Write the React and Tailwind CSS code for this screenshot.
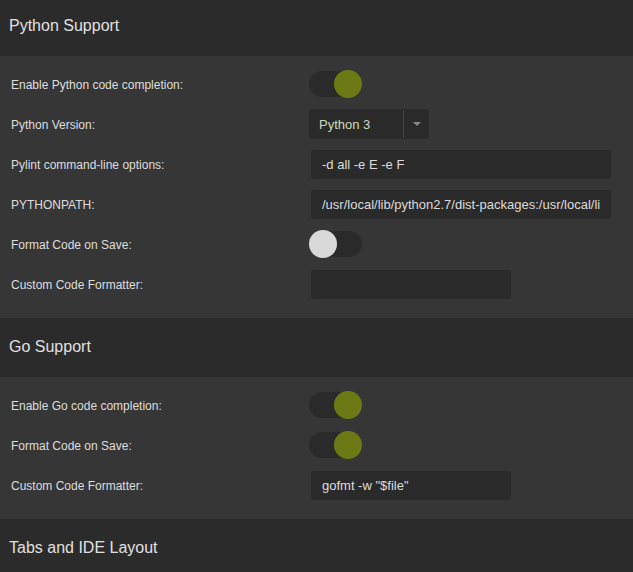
import React from 'react';

const font = { fontFamily: '"Liberation Sans", Arial, sans-serif' };

function Toggle({ on }) {
  return (
    <div className="relative w-[53px] h-[26px] rounded-full bg-[#2a2a2a]">
      <div
        className={
          on
            ? 'absolute right-0 top-[-1px] w-[28px] h-[28px] rounded-full bg-[#6b7a14]'
            : 'absolute left-0 top-[-1px] w-[28px] h-[28px] rounded-full bg-[#d9d9d9]'
        }
      />
    </div>
  );
}

function TextBox({ value, wide }) {
  return (
    <input
      readOnly
      value={value}
      className={`ml-[2px] h-[29px] rounded-[3px] bg-[#2a2a2a] px-[11px] pt-[1px] text-[13px] text-[#dcdcdc] outline-none ${
        wide ? 'w-[300px]' : 'w-[200px]'
      }`}
      style={font}
    />
  );
}

function Select() {
  return (
    <div className="w-[120px] h-[30px] rounded-[3px] bg-[#2a2a2a] flex items-center">
      <span className="flex-1 pl-[10px] pt-[1px] text-[13px] text-[#c9dcb9]">Python 3</span>
      <div className="w-[1px] h-[28px] bg-[#444]" />
      <div className="w-[25px] flex justify-center">
        <div className="w-0 h-0 border-l-[4px] border-r-[4px] border-t-[4px] border-l-transparent border-r-transparent border-t-[#888]" />
      </div>
    </div>
  );
}

function Row({ label, children }) {
  return (
    <div className="h-[40px] flex items-center">
      <div className="w-[309px] pl-[11px] pt-[2px] text-[12px] text-[#dedede]">{label}</div>
      {children}
    </div>
  );
}

function Header({ title, cut }) {
  return (
    <div
      className={`bg-[#2b2b2b] flex items-center pl-[9px] text-[16px] text-[#e0e0e0] ${
        cut ? 'h-[56px]' : 'h-[59px] pb-[2px]'
      }`}
    >
      <span className={cut ? 'mt-[-4px]' : ''}>{title}</span>
    </div>
  );
}

export default function App() {
  return (
    <div className="w-[633px] h-[572px] overflow-hidden bg-[#2b2b2b]" style={font}>
      <Header title="Python Support" cut />
      <div className="bg-[#363636] pt-[8px] pb-[14px]">
        <Row label="Enable Python code completion:">
          <Toggle on />
        </Row>
        <Row label="Python Version:">
          <Select />
        </Row>
        <Row label="Pylint command-line options:">
          <TextBox value="-d all -e E -e F" wide />
        </Row>
        <Row label="PYTHONPATH:">
          <TextBox value="/usr/local/lib/python2.7/dist-packages:/usr/local/lib/python2.7/site-packages" wide />
        </Row>
        <Row label="Format Code on Save:">
          <Toggle />
        </Row>
        <Row label="Custom Code Formatter:">
          <TextBox value="" />
        </Row>
      </div>
      <Header title="Go Support" />
      <div className="bg-[#363636] pt-[8px] pb-[14px]">
        <Row label="Enable Go code completion:">
          <Toggle on />
        </Row>
        <Row label="Format Code on Save:">
          <Toggle on />
        </Row>
        <Row label="Custom Code Formatter:">
          <TextBox value={'gofmt -w "$file"'} />
        </Row>
      </div>
      <Header title="Tabs and IDE Layout" />
    </div>
  );
}
